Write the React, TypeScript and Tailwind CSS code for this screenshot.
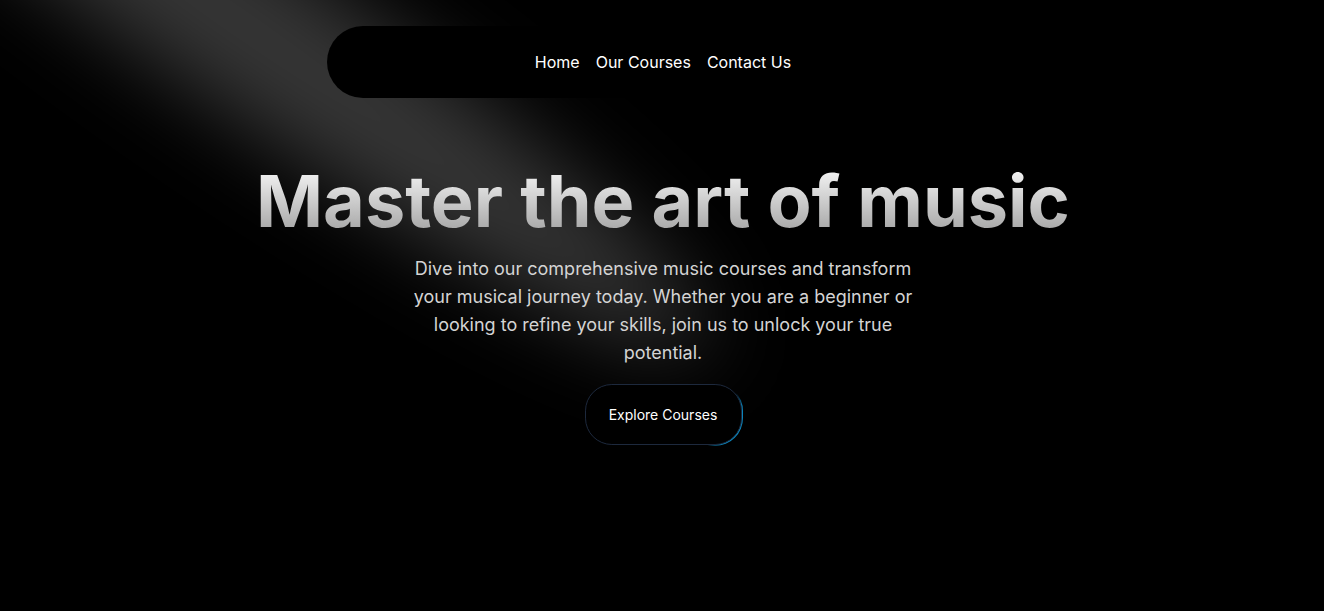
import React from "react";

const Spotlight = () => (
  <svg
    className="pointer-events-none absolute left-60 -top-20 z-0 h-[169%] w-[84%] -translate-x-1/2 -translate-y-[40%]"
    viewBox="0 0 3787 2842"
    fill="none"
  >
    <g filter="url(#spotlight-blur)">
      <ellipse
        cx="1924.71"
        cy="273.501"
        rx="1924.71"
        ry="273.501"
        transform="matrix(-0.822377 -0.568943 -0.568943 0.822377 3631.88 2291.09)"
        fill="white"
        fillOpacity="0.21"
      />
    </g>
    <defs>
      <filter
        id="spotlight-blur"
        x="0.860352"
        y="0.838989"
        width="3785.16"
        height="2840.26"
        filterUnits="userSpaceOnUse"
        colorInterpolationFilters="sRGB"
      >
        <feFlood floodOpacity="0" result="BackgroundImageFix" />
        <feBlend mode="normal" in="SourceGraphic" in2="BackgroundImageFix" result="shape" />
        <feGaussianBlur stdDeviation="151" result="blur" />
      </filter>
    </defs>
  </svg>
);

const links = ["Home", "Our Courses", "Contact Us"];

const ExploreButton = () => (
  <div className="relative h-[63px] w-[159px] overflow-hidden rounded-[1.75rem] p-px">
    <div className="absolute left-[112px] top-[4px] h-20 w-20 bg-[radial-gradient(#0ea5e9_40%,transparent_60%)] opacity-80" />
    <div className="relative flex h-full w-full items-center justify-center rounded-[1.68rem] border border-slate-800 bg-black text-sm text-white">
      Explore Courses
    </div>
  </div>
);

export default function App() {
  return (
    <div className="relative h-screen w-full overflow-hidden bg-black font-['Inter','Liberation_Sans',sans-serif]">
      <Spotlight />

      <div className="relative z-10 flex flex-col items-center pl-[18px] pr-4">
        <nav className="mt-[26px] flex h-[72px] w-full max-w-2xl items-center justify-center gap-4 rounded-full bg-black px-8 text-base text-white">
          {links.map((l) => (
            <a key={l} href="#" className="leading-6">
              {l}
            </a>
          ))}
        </nav>

        <h1 className="mt-[67px] bg-linear-to-b from-neutral-50 to-neutral-400 bg-clip-text text-center text-7xl font-bold leading-none text-transparent antialiased">
          Master the art of music
        </h1>
        <p className="mx-auto mt-[18px] max-w-lg text-center text-lg font-normal text-neutral-300 antialiased">
          Dive into our comprehensive music courses and transform your musical journey today. Whether you are a
          beginner or looking to refine your skills, join us to unlock your true potential.
        </p>
        <div className="mt-4">
          <ExploreButton />
        </div>
      </div>
    </div>
  );
}
